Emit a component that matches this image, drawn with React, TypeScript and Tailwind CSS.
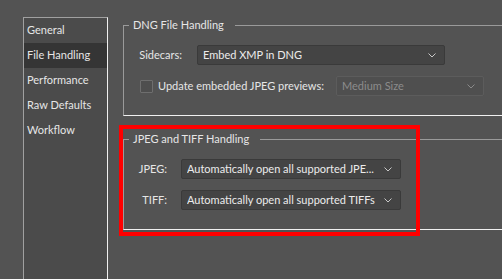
import React from 'react';

const font = { fontFamily: 'Lato, "Liberation Sans", sans-serif' };

const Chevron = ({ disabled }: { disabled?: boolean }) => (
  <svg width="8" height="5" viewBox="0 0 8 5" className="flex-none">
    <path d="M0.5 0.5 L4 4 L7.5 0.5" fill="none" stroke={disabled ? '#8a8a8a' : '#c8c8c8'} strokeWidth="1" />
  </svg>
);

const Select = ({ value, width, disabled }: { value: string; width: string; disabled?: boolean }) => (
  <div
    className={`${width} h-[20px] flex-none flex items-center justify-between pl-[5px] pr-[8px] rounded-[2px] border ${
      disabled ? 'bg-[#4f4f4f] border-[#5c5c5c] text-[#8c8c8c]' : 'bg-[#444444] border-[#3a3a3a] text-[#ececec]'
    }`}
  >
    <span className="truncate">{value}</span>
    <Chevron disabled={disabled} />
  </div>
);

const Group = ({ title, children }: { title: string; children: React.ReactNode }) => (
  <div className="relative w-[400px] h-[91px] flex-none border-t border-l border-b border-t-[#9a9a9a] border-l-[#9a9a9a] border-b-[#f0f0f0]">
    <span className="absolute -top-[9px] left-[5px] pl-[4px] pr-[11px] bg-[#535353] text-[#e6e6e6] leading-[16px]">
      {title}
    </span>
    {children}
  </div>
);

const navItems = ['General', 'File Handling', 'Performance', 'Raw Defaults', 'Workflow'];

export default function App() {
  return (
    <div className="relative w-[502px] h-[279px] overflow-hidden bg-[#535353] flex text-[11px]" style={font}>
      {/* sidebar */}
      <div className="ml-[23px] mt-[17px] w-[85px] flex-none bg-[#4b4b4b] border-t border-l border-r border-t-[#a0a0a0] border-l-[#a0a0a0] border-r-[#f0f0f0]">
        {navItems.map((item) => (
          <div
            key={item}
            className={`h-[25px] flex items-center pl-[3px] text-[#e6e6e6] ${item === 'File Handling' ? 'bg-[#353535]' : ''}`}
          >
            {item}
          </div>
        ))}
      </div>

      {/* main */}
      <div className="flex-none flex flex-col gap-[23px] pl-[15px] pt-[25px]">
        <Group title="DNG File Handling">
          <div className="flex flex-col gap-[11px] pt-[19px]">
            <div className="flex items-center">
              <span className="w-[58px] text-right text-[#e6e6e6]">Sidecars:</span>
              <span className="ml-[15px]">
                <Select value="Embed XMP in DNG" width="w-[248px]" />
              </span>
            </div>
            <div className="flex items-center">
              <div className="ml-[16px] w-[13px] h-[13px] flex-none border border-[#6e6e6e] bg-[#4e4e4e] rounded-[1px]" />
              <span className="ml-[5px] w-[165px] text-[#e6e6e6] whitespace-nowrap">Update embedded JPEG previews:</span>
              <span className="ml-[13px]">
                <Select value="Medium Size" width="w-[148px]" disabled />
              </span>
            </div>
          </div>
        </Group>

        <Group title="JPEG and TIFF Handling">
          <div className="flex flex-col gap-[11px] pt-[19px]">
            <div className="flex items-center">
              <span className="w-[43px] text-right text-[#e6e6e6]">JPEG:</span>
              <span className="ml-[14px]">
                <Select value="Automatically open all supported JPE..." width="w-[220px]" />
              </span>
            </div>
            <div className="flex items-center">
              <span className="w-[43px] text-right text-[#e6e6e6]">TIFF:</span>
              <span className="ml-[14px]">
                <Select value="Automatically open all supported TIFFs" width="w-[220px]" />
              </span>
            </div>
          </div>
        </Group>
      </div>

      {/* highlight annotation */}
      <div className="absolute left-[119px] top-[125px] w-[301px] h-[111px] border-[4px] border-[#ff0000] pointer-events-none" />
    </div>
  );
}
